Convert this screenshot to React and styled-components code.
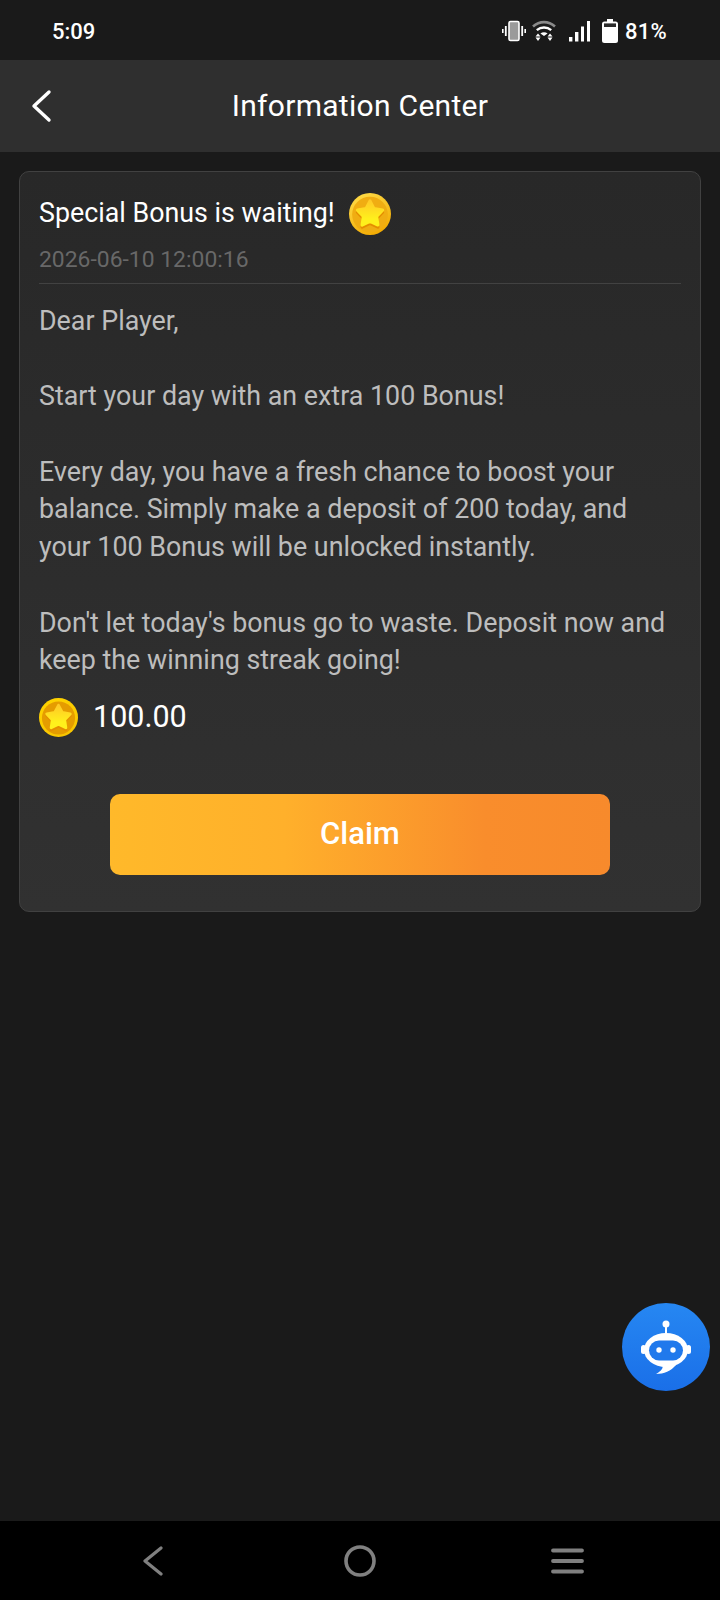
import React from 'react'
import styled, { createGlobalStyle } from 'styled-components'

const GlobalStyle = createGlobalStyle`
  html, body {
    margin: 0;
    padding: 0;
    background: #1a1a1a;
  }
  * {
    box-sizing: border-box;
  }
`

const Screen = styled.div`
  position: relative;
  display: flex;
  flex-direction: column;
  width: 720px;
  height: 1600px;
  overflow: hidden;
  background: #1a1a1a;
  font-family: Roboto, 'Liberation Sans', sans-serif;
`

const StatusBar = styled.div`
  display: flex;
  align-items: center;
  justify-content: space-between;
  height: 60px;
  padding: 2px 53px 0 52px;
  color: #fff;
  font-size: 22px;
  font-weight: 500;
`

const StatusIcons = styled.div`
  display: flex;
  align-items: center;
  gap: 6px;
`

const SignalSlot = styled.div`
  display: flex;
  margin: 0 6px 0 7px;
`

const BatteryText = styled.span`
  margin-left: 1px;
  letter-spacing: 0.3px;
`

const Header = styled.header`
  display: grid;
  grid-template-columns: 1fr auto 1fr;
  align-items: center;
  height: 92px;
  padding: 0 30px;
  background: #2f2f2f;
`

const BackButton = styled.div`
  display: flex;
  align-items: center;
`

const Title = styled.h1`
  margin: 0;
  padding-bottom: 2px;
  color: #fff;
  font-size: 30px;
  font-weight: 400;
  letter-spacing: 0.3px;
`

const Main = styled.main`
  flex: 1;
  padding: 19px 19px 0;
`

const Card = styled.section`
  height: 741px;
  padding: 21px 19px 0;
  border: 1px solid #414141;
  border-radius: 10px;
  background: linear-gradient(180deg, #282828 0%, #313131 100%);
`

const MessageHead = styled.div`
  display: flex;
  align-items: center;
  gap: 14px;
  height: 42px;
  color: #fff;
  font-size: 26.8px;
`

const HeadText = styled.span`
  padding-bottom: 2px;
`

const DateLine = styled.div`
  margin-top: 10px;
  padding-bottom: 8px;
  border-bottom: 1px solid #424242;
  color: #686868;
  font-size: 22.9px;
  line-height: 30px;
`

const Body = styled.div`
  margin-top: 19px;
  color: #bdbdbd;
  font-size: 26.85px;
  line-height: 37.7px;
`

const Paragraph = styled.p`
  margin: 0 0 37.7px;
  &:last-child {
    margin-bottom: 0;
  }
`

const Reward = styled.div`
  display: flex;
  align-items: center;
  gap: 15px;
  margin-top: 18px;
  color: #fff;
  font-size: 30.5px;
`

const RewardAmount = styled.span`
  padding-bottom: 2px;
`

const ClaimButton = styled.button`
  display: block;
  width: 500px;
  height: 81px;
  margin: 57px auto 0;
  padding: 0 0 2px;
  border: none;
  border-radius: 10px;
  background: linear-gradient(90deg, #ffb92a 0%, #ffb02b 35%, #f98d2c 75%, #f78a2c 100%);
  color: #fff;
  font-family: inherit;
  font-size: 31px;
  font-weight: 500;
`

const RobotFab = styled.div`
  position: absolute;
  left: 622px;
  top: 1303px;
  width: 88px;
  height: 88px;
  border-radius: 50%;
  background: linear-gradient(180deg, #2687f2 0%, #1a6fe8 100%);
`

const NavBar = styled.nav`
  display: grid;
  grid-template-columns: 201px 207px 33px;
  align-items: center;
  height: 79px;
  padding-left: 143px;
  background: #000;
`

const Coin = ({ size, id, rim, inner }) => (
  <svg width={size} height={size} viewBox="0 0 40 40">
    <defs>
      <linearGradient id={`${id}-rim`} x1="0.2" y1="0" x2="0.7" y2="1">
        <stop offset="0" stopColor={rim[0]} />
        <stop offset="1" stopColor={rim[1]} />
      </linearGradient>
      <linearGradient id={`${id}-star`} x1="0.5" y1="0" x2="0.5" y2="1">
        <stop offset="0" stopColor="#ffc926" />
        <stop offset="0.75" stopColor="#fff01c" />
      </linearGradient>
    </defs>
    <circle cx="20" cy="20" r="20" fill={`url(#${id}-rim)`} />
    <circle cx="20" cy="20.5" r="17" fill={inner} />
    <path
      d="M20 7.5l3.800 7.400 8.200 1.400-5.700 5.900 1.200 8.300-7.500-3.600-7.500 3.600 1.200-8.300-5.700-5.900 8.200-1.400z"
      fill="#e58e00"
      stroke="#e58e00"
      strokeWidth="3"
      strokeLinejoin="round"
      transform="translate(0 2)"
    />
    <path
      d="M20 7.500l3.800 7.400 8.200 1.400-5.700 5.900 1.200 8.300-7.500-3.600-7.500 3.600 1.200-8.300-5.700-5.900 8.200-1.400z"
      fill={`url(#${id}-star)`}
      stroke={`url(#${id}-star)`}
      strokeWidth="3"
      strokeLinejoin="round"
    />
  </svg>
)

const VibrateIcon = () => (
  <svg width="24" height="22" viewBox="0 0 24 22">
    <rect x="7" y="1.5" width="10" height="19" rx="1.5" fill="#9a9a9a" stroke="#fff" strokeWidth="1.6" />
    <path d="M3.8 6v10M20.2 6v10" stroke="#fff" strokeWidth="1.8" />
    <path d="M0.8 9v4M23.2 9v4" stroke="#fff" strokeWidth="1.6" />
  </svg>
)

const WifiIcon = () => (
  <svg width="24" height="22" viewBox="0 0 24 22">
    <path d="M1 6.500C7.500 0.600 16.500 0.600 23 6.500" fill="none" stroke="#8a8a8a" strokeWidth="2.600" />
    <path d="M4.800 10.200C9 6.600 15 6.600 19.200 10.200" fill="none" stroke="#fff" strokeWidth="2.400" />
    <path d="M8.400 13.600C10.600 11.900 13.400 11.900 15.600 13.600L12 16z" fill="#fff" />
    <path d="M3.500 16.500h5l-2.500-3zM3.500 17.500h5l-2.500 3.500z" fill="#fff" />
    <path d="M15.500 17.500h5l-2.500 3.500zM15.500 16.500h5l-2.500-3z" fill="#fff" />
  </svg>
)

const SignalIcon = () => (
  <svg width="21" height="22" viewBox="0 0 21 22">
    <rect x="0" y="17" width="3.400" height="4.500" fill="#fff" />
    <rect x="6" y="12" width="3.400" height="9.500" fill="#fff" />
    <rect x="12" y="6.500" width="3" height="15" fill="#fff" />
    <rect x="18" y="1" width="3" height="20.500" fill="#fff" />
  </svg>
)

const BatteryIcon = () => (
  <svg width="16" height="24" viewBox="0 0 16 24">
    <path d="M5 0h6v2.400h2.500A2.500 2.500 0 0 1 16 4.900v16.600a2.500 2.500 0 0 1-2.500 2.500h-11A2.500 2.500 0 0 1 0 21.500V4.900a2.500 2.500 0 0 1 2.500-2.500H5z" fill="#fff" />
    <rect x="2" y="4.400" width="12" height="3.600" fill="#2b2b2b" />
  </svg>
)

const BackIcon = () => (
  <svg width="24" height="34" viewBox="0 0 24 34">
    <path d="M19 3L4 17l15 14" fill="none" stroke="#fff" strokeWidth="3.400" strokeLinecap="round" strokeLinejoin="round" />
  </svg>
)

const RobotIcon = () => (
  <svg width="88" height="88" viewBox="0 0 88 88">
    <circle cx="44" cy="21" r="3.500" fill="#fff" />
    <rect x="43" y="23" width="2" height="8" fill="#fff" />
    <ellipse cx="44" cy="47" rx="22" ry="17" fill="#fff" />
    <path d="M40 62c2 3-1 6-6 9 8 0 15-3 20-9z" fill="#fff" />
    <rect x="19" y="42" width="5" height="9" rx="2.500" fill="#fff" />
    <rect x="64" y="42" width="5" height="9" rx="2.500" fill="#fff" />
    <rect x="27" y="37.500" width="34" height="20" rx="10" fill="#2079ec" />
    <circle cx="37" cy="47" r="2.700" fill="#fff" />
    <circle cx="51" cy="47" r="2.700" fill="#fff" />
  </svg>
)

const NavBack = () => (
  <svg width="20" height="30" viewBox="0 0 20 30">
    <path d="M18 2L2 15l16 13" fill="none" stroke="#808080" strokeWidth="3.200" strokeLinecap="round" strokeLinejoin="round" />
  </svg>
)

const NavHome = () => (
  <svg width="32" height="32" viewBox="0 0 32 32">
    <circle cx="16" cy="16" r="14" fill="none" stroke="#808080" strokeWidth="3.600" />
  </svg>
)

const NavMenu = () => (
  <svg width="33" height="26" viewBox="0 0 33 26">
    <path d="M2 2.500h29M2 13h29M2 23.500h29" stroke="#808080" strokeWidth="3.800" strokeLinecap="round" />
  </svg>
)

const paragraphs = [
  'Dear Player,',
  'Start your day with an extra 100 Bonus!',
  'Every day, you have a fresh chance to boost your balance. Simply make a deposit of 200 today, and your 100 Bonus will be unlocked instantly.',
  "Don't let today's bonus go to waste. Deposit now and keep the winning streak going!",
]

export default function App() {
  return (
    <Screen>
      <GlobalStyle />
      <StatusBar>
        <span>5:09</span>
        <StatusIcons>
          <VibrateIcon />
          <WifiIcon />
          <SignalSlot>
            <SignalIcon />
          </SignalSlot>
          <BatteryIcon />
          <BatteryText>81%</BatteryText>
        </StatusIcons>
      </StatusBar>
      <Header>
        <BackButton>
          <BackIcon />
        </BackButton>
        <Title>Information Center</Title>
      </Header>
      <Main>
        <Card>
          <MessageHead>
            <HeadText>Special Bonus is waiting!</HeadText>
            <Coin size={42} id="head-coin" rim={['#ffdc48', '#f2a900']} inner="#f0ad12" />
          </MessageHead>
          <DateLine>2026-06-10 12:00:16</DateLine>
          <Body>
            {paragraphs.map((text) => (
              <Paragraph key={text}>{text}</Paragraph>
            ))}
          </Body>
          <Reward>
            <Coin size={39} id="reward-coin" rim={['#ffd400', '#f8c400']} inner="#e59c00" />
            <RewardAmount>100.00</RewardAmount>
          </Reward>
          <ClaimButton>Claim</ClaimButton>
        </Card>
      </Main>
      <NavBar>
        <NavBack />
        <NavHome />
        <NavMenu />
      </NavBar>
      <RobotFab>
        <RobotIcon />
      </RobotFab>
    </Screen>
  )
}
